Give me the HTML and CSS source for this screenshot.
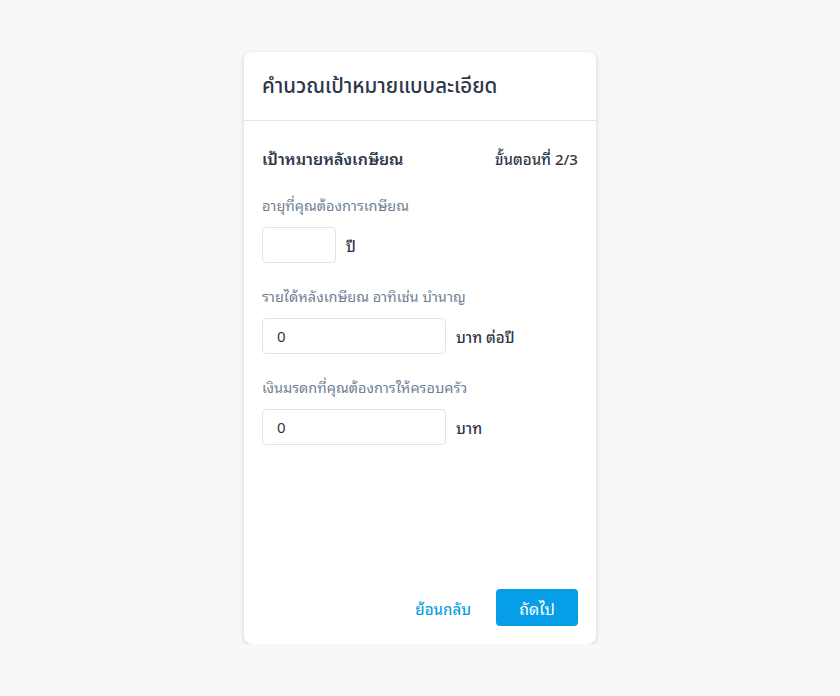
FILE: index.html
```html
<!DOCTYPE html>
<html lang="th">
<head>
<meta charset="utf-8">
<link rel="stylesheet" href="styles.css">
</head>
<body>
<div class="page">
  <div class="card">
    <div class="card-header">
      <h1 class="title">คำนวณเป้าหมายแบบละเอียด</h1>
    </div>
    <div class="card-body">
      <div class="section-head">
        <span class="section-title">เป้าหมายหลังเกษียณ</span>
        <span class="step">ขั้นตอนที่ 2/3</span>
      </div>
      <div class="field">
        <div class="label">อายุที่คุณต้องการเกษียณ</div>
        <div class="row">
          <div class="input input-sm"></div>
          <span class="unit">ปี</span>
        </div>
      </div>
      <div class="field">
        <div class="label">รายได้หลังเกษียณ อาทิเช่น บำนาญ</div>
        <div class="row">
          <div class="input input-lg">0</div>
          <span class="unit">บาท ต่อปี</span>
        </div>
      </div>
      <div class="field">
        <div class="label">เงินมรดกที่คุณต้องการให้ครอบครัว</div>
        <div class="row">
          <div class="input input-lg">0</div>
          <span class="unit">บาท</span>
        </div>
      </div>
    </div>
    <div class="card-footer">
      <span class="link">ย้อนกลับ</span>
      <span class="btn">ถัดไป</span>
    </div>
  </div>
</div>
</body>
</html>
```
FILE: styles.css
```css
html, body {
  margin: 0;
  padding: 0;
  background: #f8f8f8;
  font-family: "Noto Sans Thai Looped", "Noto Sans", sans-serif;
}
.page {
  display: flex;
  justify-content: center;
  padding-top: 52px;
}
.card {
  width: 352px;
  height: 592px;
  background: #fff;
  border-radius: 8px;
  box-shadow: 0 2px 5px rgba(0,0,0,0.16);
  display: flex;
  flex-direction: column;
}
.card-header {
  height: 68px;
  border-bottom: 1px solid #e2e4ea;
  display: flex;
  align-items: center;
  padding: 0 18px;
}
.title {
  margin: 0;
  font-family: "Noto Sans", "Noto Sans Thai", sans-serif;
  font-size: 20.5px;
  font-weight: 500;
  color: #2d3748;
}
.card-body {
  padding: 24px 18px 0;
  flex: 1;
}
.section-head {
  display: flex;
  justify-content: space-between;
  align-items: center;
  color: #2d3748;
  font-size: 16px;
  font-weight: 600;
  margin-bottom: 24px;
}
.step {
  font-size: 15px;
  font-weight: 500;
}
.field {
  margin-bottom: 23px;
}
.label {
  font-size: 14.5px;
  line-height: 20px;
  color: #718096;
  margin-bottom: 12px;
}
.row {
  display: flex;
  align-items: center;
  gap: 10px;
}
.input {
  height: 36px;
  border: 1px solid #e2e4ea;
  border-radius: 4px;
  box-sizing: border-box;
  display: flex;
  align-items: center;
  padding: 0 14px;
  font-family: "Noto Sans", sans-serif;
  font-size: 15px;
  color: #2d3748;
}
.input-sm { width: 74px; }
.input-lg { width: 184px; }
.unit {
  font-size: 15px;
  color: #2d3748;
  font-weight: 500;
}
.card-footer {
  display: flex;
  justify-content: flex-end;
  align-items: center;
  gap: 25px;
  padding: 0 18px 18px;
}
.link {
  color: #0b9ee3;
  font-size: 15px;
  font-weight: 500;
}
.btn {
  width: 82px;
  height: 37px;
  background: #069ee6;
  color: #fff;
  border-radius: 4px;
  display: flex;
  align-items: center;
  justify-content: center;
  font-size: 16px;
  font-weight: 400;
}
```
